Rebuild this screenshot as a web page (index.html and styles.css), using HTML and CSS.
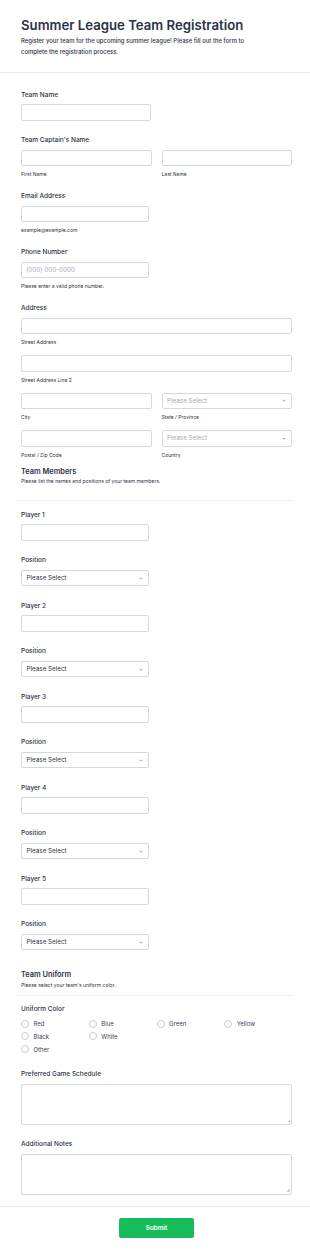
FILE: index.html
```html
<!DOCTYPE html>
<html lang="en">
<head>
<meta charset="utf-8">
<title>Summer League Team Registration</title>
<link rel="stylesheet" href="styles.css">
</head>
<body>
<header class="header">
  <h1 class="title">Summer League Team Registration</h1>
  <p class="desc">Register your team for the upcoming summer league! Please fill out the form to<br>complete the registration process.</p>
</header>
<form class="form">
  <div class="field">
    <label class="label">Team Name</label>
    <input class="input w130" type="text">
  </div>
  <div class="field field-sub">
    <label class="label">Team Captain's Name</label>
    <div class="row2">
      <div class="sub"><input class="input" type="text"><span class="sublabel">First Name</span></div>
      <div class="sub"><input class="input" type="text"><span class="sublabel">Last Name</span></div>
    </div>
  </div>
  <div class="field field-sub">
    <label class="label">Email Address</label>
    <input class="input w128" type="email">
    <span class="sublabel">example@example.com</span>
  </div>
  <div class="field field-sub">
    <label class="label">Phone Number</label>
    <input class="input w128" type="tel" placeholder="(000) 000-0000">
    <span class="sublabel">Please enter a valid phone number.</span>
  </div>
  <div class="field field-address">
    <label class="label">Address</label>
    <div class="address">
      <div class="sub full"><input class="input" type="text"><span class="sublabel">Street Address</span></div>
      <div class="sub full"><input class="input" type="text"><span class="sublabel">Street Address Line 2</span></div>
      <div class="sub"><input class="input" type="text"><span class="sublabel">City</span></div>
      <div class="sub"><div class="select placeholder"><span>Please Select</span><svg class="chev" viewBox="0 0 8 5"><path d="M1 1l3 3 3-3"/></svg></div><span class="sublabel">State / Province</span></div>
      <div class="sub"><input class="input" type="text"><span class="sublabel">Postal / Zip Code</span></div>
      <div class="sub"><div class="select placeholder"><span>Please Select</span><svg class="chev" viewBox="0 0 8 5"><path d="M1 1l3 3 3-3"/></svg></div><span class="sublabel">Country</span></div>
    </div>
  </div>

  <div class="section-head members">
    <h2 class="section-title">Team Members</h2>
    <p class="section-sub">Please list the names and positions of your team members.</p>
  </div>

  <div class="field"><label class="label">Player 1</label><input class="input w128" type="text"></div>
  <div class="field"><label class="label">Position</label><div class="select w128"><span>Please Select</span><svg class="chev" viewBox="0 0 8 5"><path d="M1 1l3 3 3-3"/></svg></div></div>
  <div class="field"><label class="label">Player 2</label><input class="input w128" type="text"></div>
  <div class="field"><label class="label">Position</label><div class="select w128"><span>Please Select</span><svg class="chev" viewBox="0 0 8 5"><path d="M1 1l3 3 3-3"/></svg></div></div>
  <div class="field"><label class="label">Player 3</label><input class="input w128" type="text"></div>
  <div class="field"><label class="label">Position</label><div class="select w128"><span>Please Select</span><svg class="chev" viewBox="0 0 8 5"><path d="M1 1l3 3 3-3"/></svg></div></div>
  <div class="field"><label class="label">Player 4</label><input class="input w128" type="text"></div>
  <div class="field"><label class="label">Position</label><div class="select w128"><span>Please Select</span><svg class="chev" viewBox="0 0 8 5"><path d="M1 1l3 3 3-3"/></svg></div></div>
  <div class="field"><label class="label">Player 5</label><input class="input w128" type="text"></div>
  <div class="field"><label class="label">Position</label><div class="select w128"><span>Please Select</span><svg class="chev" viewBox="0 0 8 5"><path d="M1 1l3 3 3-3"/></svg></div></div>

  <div class="section-head uniform">
    <h2 class="section-title">Team Uniform</h2>
    <p class="section-sub">Please select your team's uniform color.</p>
  </div>

  <div class="field field-radio">
    <label class="label">Uniform Color</label>
    <div class="radios">
      <div class="radio-row">
        <span class="radio"><span class="circle"></span>Red</span>
        <span class="radio"><span class="circle"></span>Blue</span>
        <span class="radio"><span class="circle"></span>Green</span>
        <span class="radio"><span class="circle"></span>Yellow</span>
      </div>
      <div class="radio-row">
        <span class="radio"><span class="circle"></span>Black</span>
        <span class="radio"><span class="circle"></span>White</span>
      </div>
      <div class="radio-row">
        <span class="radio"><span class="circle"></span>Other</span>
      </div>
    </div>
  </div>
  <div class="field">
    <label class="label">Preferred Game Schedule</label>
    <div class="textarea"><span class="grip"></span></div>
  </div>
  <div class="field field-last">
    <label class="label">Additional Notes</label>
    <div class="textarea"><span class="grip"></span></div>
  </div>
</form>
<footer class="footer">
  <button class="submit" type="button">Submit</button>
</footer>
</body>
</html>
```

FILE: styles.css
```css
* {
  box-sizing: border-box;
  margin: 0;
  padding: 0;
}

body {
  margin: 0;
  background: #ffffff;
  font-family: Inter, "Noto Sans", sans-serif;
  color: #2c3345;
}

.header {
  padding: 17px 21px 15px;
  border-bottom: 1px solid #e8e9f0;
}

.title {
  font-size: 13.2px;
  line-height: 17px;
  font-weight: 600;
  color: #2c3345;
}

.desc {
  margin-top: 1px;
  font-size: 5.95px;
  line-height: 11px;
  font-weight: 500;
  color: #2c3345;
}

.form {
  display: flex;
  flex-direction: column;
  margin: 0 16px 0 15px;
  padding-top: 16.5px;
}

.field {
  display: flex;
  flex-direction: column;
  align-items: flex-start;
  padding: 0 2px 14.5px 6px;
}

.field-sub {
  padding-bottom: 14px;
}

.field-address {
  padding-bottom: 4px;
}

.field-radio {
  padding-bottom: 13.5px;
}

.field-last {
  padding-bottom: 11px;
}

.label {
  display: block;
  font-size: 6.5px;
  line-height: 10px;
  font-weight: 500;
  color: #2c3345;
  margin-bottom: 4.5px;
}

.input,
.select,
.textarea {
  display: block;
  width: 100%;
  height: 16.5px;
  border: 1px solid #d5d8e3;
  border-radius: 2px;
  background: #ffffff;
  font-family: inherit;
  font-size: 6.3px;
  color: #2c3345;
  padding: 0 4px;
  outline: none;
}

.input::placeholder {
  color: #a4a9bb;
}

.w130 {
  width: 130px;
}

.w128 {
  width: 128px;
}

.row2,
.address {
  display: grid;
  grid-template-columns: 1fr 1fr;
  column-gap: 10px;
  width: 100%;
}

.address {
  row-gap: 10px;
}

.sub {
  display: flex;
  flex-direction: column;
  min-width: 0;
}

.sub.full {
  grid-column: 1 / -1;
}

.sublabel {
  display: block;
  margin-top: 5px;
  font-size: 5px;
  line-height: 6px;
  color: #2c3345;
}

.select {
  display: flex;
  align-items: center;
  justify-content: space-between;
  padding: 0 5px 0 4.5px;
  font-size: 6.3px;
  color: #2c3345;
}

.select.placeholder {
  color: #a4a9bb;
}

.chev {
  width: 4px;
  height: 3px;
  fill: none;
  stroke: #6b7489;
  stroke-width: 1.3;
}

.section-head {
  display: flex;
  flex-direction: column;
  padding: 5px 6px 14.5px;
  border-bottom: 1px solid #eef0f4;
  margin-bottom: 9px;
}

.section-head.uniform {
  padding-bottom: 6px;
  margin-bottom: 8.7px;
}

.section-title {
  font-size: 7.4px;
  line-height: 10px;
  font-weight: 600;
  color: #2c3345;
}

.section-sub {
  margin-top: 1.8px;
  font-size: 5px;
  line-height: 7px;
  color: #2c3345;
}

.radios {
  display: flex;
  flex-direction: column;
  width: 100%;
  margin-top: -1.5px;
}

.radio-row {
  display: grid;
  grid-template-columns: repeat(4, 1fr);
}

.radio {
  display: flex;
  align-items: center;
  gap: 4.5px;
  height: 12.8px;
  font-size: 6px;
  color: #3a4560;
}

.circle {
  flex: none;
  width: 8px;
  height: 8px;
  border: 1px solid #c9cdd9;
  border-radius: 50%;
  background: #ffffff;
}

.textarea {
  position: relative;
  height: 41px;
}

.grip {
  position: absolute;
  right: 1.5px;
  bottom: 1.5px;
  width: 3px;
  height: 3px;
  background: linear-gradient(135deg, transparent 50%, #c7cad4 50%);
}

.footer {
  border-top: 1px solid #e8e9f0;
  display: flex;
  justify-content: center;
  padding: 11.5px 0 0 3px;
}

.submit {
  width: 75px;
  height: 20px;
  border: none;
  border-radius: 2px;
  background: #18bd5b;
  color: #ffffff;
  font-family: inherit;
  font-size: 6.3px;
  font-weight: 600;
}
```
